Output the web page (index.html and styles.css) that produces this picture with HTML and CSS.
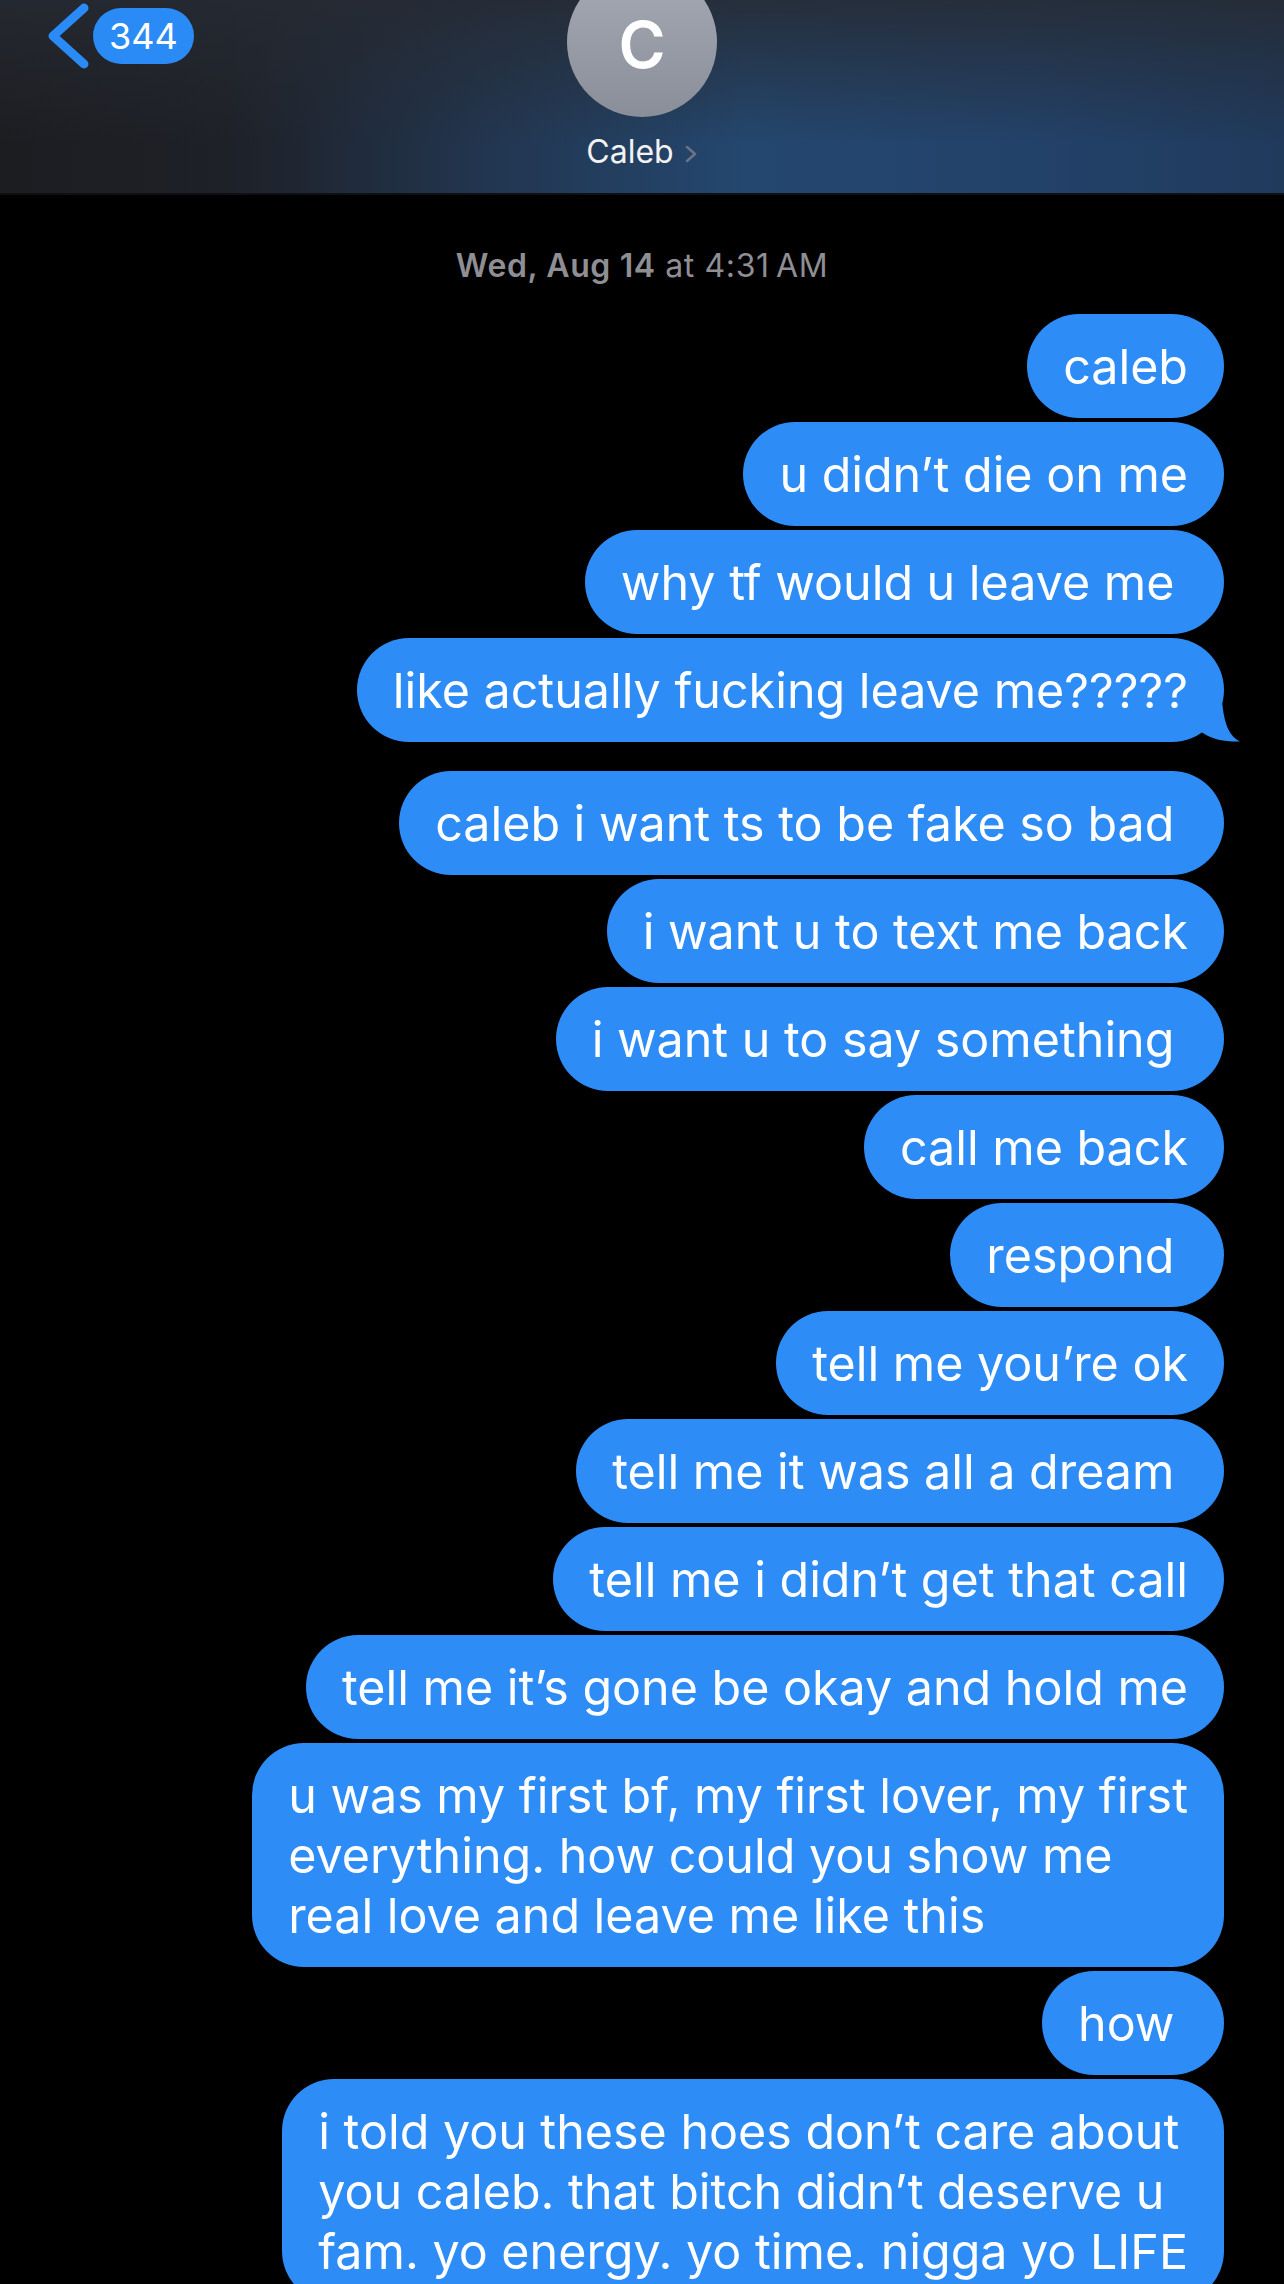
FILE: index.html
```html
<!DOCTYPE html>
<html lang="en">
<head>
  <meta charset="UTF-8">
  <meta name="viewport" content="width=device-width, initial-scale=1.0">
  <title>Caleb</title>
  <link rel="stylesheet" href="styles.css">
</head>
<body>

  <div class="screen">
    <!-- Barra do topo -->
    <header class="chat-header">
      <div class="back">
        <svg class="back-arrow" width="44" height="68" viewBox="0 0 44 68">
          <path d="M38 6 L7 34 L38 62" />
        </svg>
        <span class="badge">344</span>
      </div>

      <div class="contact">
        <div class="avatar">C</div>
        <div class="name">
          Caleb
          <svg class="name-chevron" width="14" height="18" viewBox="0 0 14 18">
            <path d="M3 2 L11 9 L3 16" />
          </svg>
        </div>
      </div>
    </header>

    <!-- Conversa -->
    <main class="thread">
      <p class="stamp"><span class="day">Wed, Aug 14</span> at 4:31&#8239;AM</p>

      <div class="group">
        <div class="bubble">caleb</div>
        <div class="bubble">u didn’t die on me</div>
        <div class="bubble">why tf would u leave me&nbsp;</div>
        <div class="bubble has-tail">
          like actually fucking leave me?????
          <svg class="tail" width="52" height="46" viewBox="0 0 52 46">
            <path d="M0 30 L14 37 C24 44 38 46 51 45.5 C42 41 35 31 33 4 L0 4 Z" />
          </svg>
        </div>
      </div>

      <div class="group">
        <div class="bubble">caleb i want ts to be fake so bad&nbsp;</div>
        <div class="bubble">i want u to text me back</div>
        <div class="bubble">i want u to say something&nbsp;</div>
        <div class="bubble">call me back</div>
        <div class="bubble">respond&nbsp;</div>
        <div class="bubble">tell me you’re ok</div>
        <div class="bubble">tell me it was all a dream&nbsp;</div>
        <div class="bubble">tell me i didn’t get that call</div>
        <div class="bubble">tell me it’s gone be okay and hold me</div>
        <div class="bubble">u was my first bf, my first lover, my first<br>everything. how could you show me<br>real love and leave me like this</div>
        <div class="bubble">how&nbsp;</div>
        <div class="bubble">i told you these hoes don’t care about<br>you caleb. that bitch didn’t deserve u<br>fam. yo energy. yo time. nigga yo LIFE</div>
      </div>
    </main>
  </div>

</body>
</html>
```

FILE: styles.css
```css
body {
  margin: 0;
  padding: 0;
  background-color: #000;
  font-family: "Inter", "Roboto", "Liberation Sans", sans-serif;
  color: #fff;
}

.screen {
  width: 1284px;
  height: 2284px;
  overflow: hidden;
  background-color: #000;
}

/* topo */
.chat-header {
  height: 195px;
  display: grid;
  grid-template-columns: 1fr auto 1fr;
  background:
    linear-gradient(to bottom, rgba(38, 42, 50, 0.85) 0%, rgba(38, 42, 50, 0) 75%),
    linear-gradient(to right, #1c1d21 0%, #1e2128 18%, #223650 38%, #24476f 58%, #23426a 80%, #203a5c 100%);
  border-bottom: 2px solid #0e1014;
  box-sizing: border-box;
}

.back {
  display: flex;
  align-items: flex-start;
  padding: 2px 0 0 46px;
}

.back-arrow path {
  fill: none;
  stroke: #2a8bf6;
  stroke-width: 9;
  stroke-linecap: round;
  stroke-linejoin: round;
}

.badge {
  margin: 6px 0 0 3px;
  height: 56px;
  min-width: 99px;
  box-sizing: border-box;
  padding: 0 16px;
  border-radius: 28px;
  background-color: #2a8bf6;
  color: #fff;
  font-size: 36px;
  line-height: 56px;
  text-align: center;
}

.contact {
  display: flex;
  flex-direction: column;
  align-items: center;
}

.avatar {
  margin-top: -33px;
  width: 150px;
  height: 150px;
  border-radius: 50%;
  background: linear-gradient(to bottom, #a6aab5, #8a8e99);
  display: flex;
  justify-content: center;
  align-items: center;
  box-sizing: border-box;
  padding-top: 5px;
  font-size: 64px;
  font-weight: 600;
  color: #fff;
}

.name {
  margin-top: 16px;
  display: flex;
  align-items: center;
  gap: 10px;
  font-size: 32px;
  line-height: 38px;
  color: #f2f2f2;
}

.name-chevron {
  margin-top: 4px;
}

.name-chevron path {
  fill: none;
  stroke: #6a7484;
  stroke-width: 2.5;
  stroke-linecap: round;
  stroke-linejoin: round;
}

/* conversa */
.stamp {
  margin: 53px 0 30px 0;
  text-align: center;
  font-size: 32px;
  line-height: 36px;
  letter-spacing: 0.6px;
  color: #8e8e93;
}

.stamp .day {
  font-weight: 600;
}

.group {
  display: flex;
  flex-direction: column;
  align-items: flex-end;
  gap: 4px;
  padding-right: 60px;
  margin-bottom: 29px;
}

.bubble {
  position: relative;
  padding: 23px 36px 21px 36px;
  border-radius: 52px;
  background-color: #2d8cf6;
  color: #fff;
  font-size: 48.4px;
  line-height: 60px;
  white-space: nowrap;
}

.tail {
  position: absolute;
  right: -17px;
  bottom: 0;
}

.tail path {
  fill: #2d8cf6;
}
```
